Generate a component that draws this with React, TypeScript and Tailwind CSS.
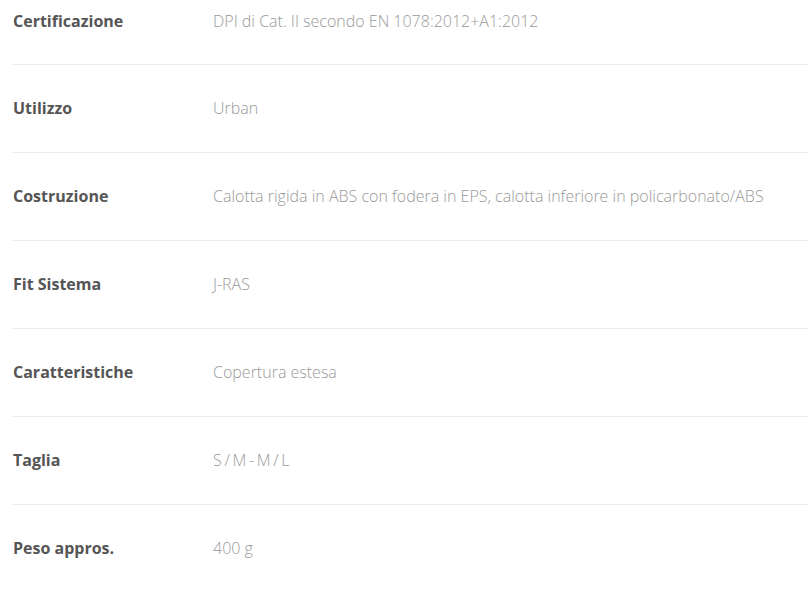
const rows: [string, string][] = [
  ["Certificazione", "DPI di Cat. II secondo EN 1078:2012+A1:2012"],
  ["Utilizzo", "Urban"],
  ["Costruzione", "Calotta rigida in ABS con fodera in EPS, calotta inferiore in policarbonato/ABS"],
  ["Fit Sistema", "J-RAS"],
  ["Caratteristiche", "Copertura estesa"],
  ["Taglia", "S / M - M / L"],
  ["Peso appros.", "400 g"],
]

export default function App() {
  return (
    <div className="bg-white pl-[13px] font-['Open_Sans',sans-serif] text-[16px] leading-[22px]">
      {rows.map(([label, value], i) => (
        <div
          key={label}
          className={`flex items-center border-b border-[#ebebeb] ${i === 0 ? "pt-[10px] pb-[32px]" : "pt-[32px] pb-[33px]"}`}
        >
          <div className="w-[200px] shrink-0 font-bold text-[#555555]">{label}</div>
          <div className={`font-light text-[#999999] ${label === "Taglia" ? "[word-spacing:-1.5px]" : ""}`}>
            {value}
          </div>
        </div>
      ))}
    </div>
  )
}
